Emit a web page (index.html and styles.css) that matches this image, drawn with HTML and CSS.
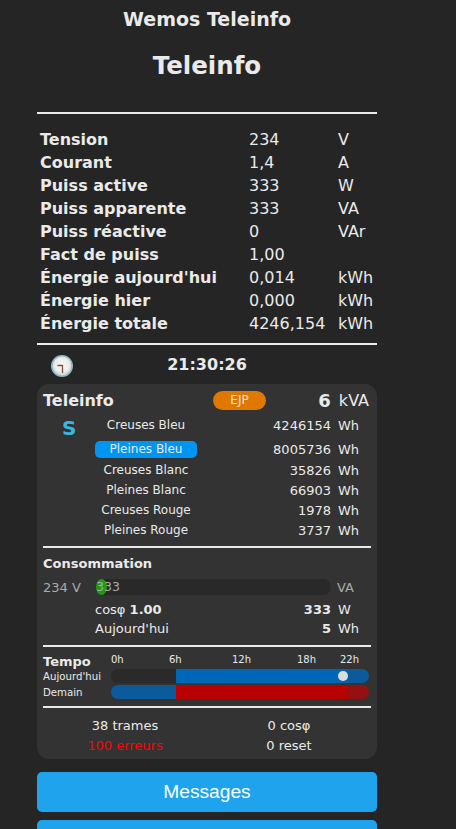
FILE: index.html
```html
<!DOCTYPE html>
<html lang="fr">
<head>
<meta charset="utf-8">
<title>Wemos Teleinfo</title>
<link rel="stylesheet" href="styles.css">
</head>
<body>
<div class="page">
  <h3 class="host">Wemos Teleinfo</h3>
  <h2 class="name">Teleinfo</h2>
  <div class="panel">
    <hr class="rule top-rule">
    <table class="sensors">
      <tr><th>Tension</th><td class="val">234</td><td>V</td></tr>
      <tr><th>Courant</th><td class="val">1,4</td><td>A</td></tr>
      <tr><th>Puiss active</th><td class="val">333</td><td>W</td></tr>
      <tr><th>Puiss apparente</th><td class="val">333</td><td>VA</td></tr>
      <tr><th>Puiss réactive</th><td class="val">0</td><td>VAr</td></tr>
      <tr><th>Fact de puiss</th><td class="val">1,00</td><td></td></tr>
      <tr><th>Énergie aujourd'hui</th><td class="val">0,014</td><td>kWh</td></tr>
      <tr><th>Énergie hier</th><td class="val">0,000</td><td>kWh</td></tr>
      <tr><th>Énergie totale</th><td class="val">4246,154</td><td>kWh</td></tr>
    </table>
    <hr class="rule">
    <div class="clock-row">
      <svg class="clock" viewBox="0 0 24 24" width="24" height="24" aria-hidden="true">
        <defs><radialGradient id="face" cx="50%" cy="45%" r="55%"><stop offset="0" stop-color="#fafafa"/><stop offset=".72" stop-color="#ecebe6"/><stop offset="1" stop-color="#c3d0d0"/></radialGradient></defs>
        <circle cx="12" cy="12" r="11" fill="#8fb8c4"/>
        <circle cx="12" cy="12" r="9.4" fill="url(#face)"/>
        <path d="M7.5 11.5 H12.5 V19" stroke="#7a5044" stroke-width="1.3" fill="none"/>
      </svg>
      <b class="time">21:30:26</b>
    </div>
    <section class="card">
      <div class="card-head">
        <b class="card-title">Teleinfo</b>
        <span class="badge">EJP</span>
        <span class="power"><b>6</b><span>kVA</span></span>
      </div>
      <div class="tariffs">
        <div class="logo-col"><span class="logo">S</span></div>
        <div class="tariff-list">
          <div class="tariff"><span class="t-name">Creuses Bleu</span><span class="t-val">4246154</span><span class="t-unit">Wh</span></div>
          <div class="tariff t-active"><span class="t-name"><span class="pill">Pleines Bleu</span></span><span class="t-val">8005736</span><span class="t-unit">Wh</span></div>
          <div class="tariff"><span class="t-name">Creuses Blanc</span><span class="t-val">35826</span><span class="t-unit">Wh</span></div>
          <div class="tariff"><span class="t-name">Pleines Blanc</span><span class="t-val">66903</span><span class="t-unit">Wh</span></div>
          <div class="tariff"><span class="t-name">Creuses Rouge</span><span class="t-val">1978</span><span class="t-unit">Wh</span></div>
          <div class="tariff"><span class="t-name">Pleines Rouge</span><span class="t-val">3737</span><span class="t-unit">Wh</span></div>
        </div>
      </div>
      <hr class="rule inner">
      <b class="sub">Consommation</b>
      <div class="gauge-row">
        <span class="volt">234 V</span>
        <div class="gauge"><span class="gauge-dot"></span><span class="gauge-num">333</span></div>
        <span class="va">VA</span>
      </div>
      <div class="cons"><span class="c-name">cosφ <b>1.00</b></span><b class="c-val">333</b><span class="c-unit">W</span></div>
      <div class="cons"><span class="c-name">Aujourd'hui</span><b class="c-val">5</b><span class="c-unit">Wh</span></div>
      <hr class="rule inner">
      <div class="tempo">
        <div class="tempo-hours"><b class="tempo-title">Tempo</b>
          <div class="hours"><span class="h0">0h</span><span class="h6">6h</span><span class="h12">12h</span><span class="h18">18h</span><span class="h22">22h</span></div>
        </div>
        <div class="tempo-row"><span class="tempo-label">Aujourd'hui</span>
          <div class="track"><i class="seg s-dark"></i><i class="seg s-blue"></i><i class="seg s-blue-dim s-fill"></i><span class="now"></span></div>
        </div>
        <div class="tempo-row"><span class="tempo-label">Demain</span>
          <div class="track"><i class="seg s-blue-dim s-first"></i><i class="seg s-red"></i><i class="seg s-red-dim"></i></div>
        </div>
      </div>
      <hr class="rule inner">
      <div class="stats">
        <span>38 trames</span><span>0 cosφ</span>
        <span class="err">100 erreurs</span><span>0 reset</span>
      </div>
    </section>
    <button class="btn" type="button">Messages</button>
    <button class="btn" type="button" aria-label="Suite"></button>
  </div>
</div>
</body>
</html>
```
FILE: styles.css
```css
* { box-sizing: border-box; }
html, body { margin: 0; height: 829px; overflow: hidden; background: #252525; }
body { color: #eaeaea; font-family: "DejaVu Sans", Verdana, sans-serif; font-size: 16px; }
.page { width: 414px; text-align: center; }
.host { margin: 0; padding-top: 8px; font-size: 19px; line-height: 22px; }
.name { margin: 0; padding-top: 22px; font-size: 24.5px; line-height: 28px; }
.panel { width: 340px; margin: 32px auto 0; text-align: left; }
.rule { display: block; height: 2px; margin: 0; border: 0; background: #eaeaea; }
.sensors { border-collapse: collapse; margin: 14px 0 8px; width: 340px; table-layout: fixed; }
.sensors th, .sensors td { padding: 0 0 0 3px; height: 23px; line-height: 23px; font-weight: normal; text-align: left; white-space: nowrap; }
.sensors th { width: 209px; font-weight: bold; }
.sensors .val { width: 89px; }
.clock-row { display: flex; align-items: center; height: 39px; position: relative; }
.clock { margin-left: 13px; margin-top: 2px; }
.time { position: absolute; left: 0; right: 0; text-align: center; }
.card { background: #333; border-radius: 12px; height: 375px; padding: 6px 6px 0; }
.card-head { display: flex; align-items: center; height: 20px; }
.card-title { width: 170px; font-size: 16px; }
.badge { width: 53px; height: 19px; line-height: 18px; border-radius: 10px; background: #e07800; text-align: center; font-size: 12px; }
.power { flex: 1; display: flex; justify-content: flex-end; align-items: center; padding-right: 2px; font-size: 16px; }
.power b { font-size: 18px; margin-right: 8px; }
.tariffs { display: flex; margin-top: 5px; }
.logo-col { flex: none; width: 42px; padding: 1px 0 0 19px; }
.logo { color: #38b6e0; font-weight: bold; font-size: 20px; line-height: 24px; }
.tariff-list { flex: 1; }
.tariff { display: flex; align-items: center; height: 20px; font-size: 12px; white-space: nowrap; }
.t-name { flex: none; width: 122px; text-align: center; }
.t-val { flex: none; width: 124px; text-align: right; font-size: 13px; }
.t-unit { margin-left: 7px; font-size: 13px; }
.t-active { height: 22px; margin-top: 3px; }
.pill { display: block; margin: 0 10px; height: 17px; line-height: 17px; border-radius: 5px; background: #0095f0; }
.inner { margin-top: 6px; margin-bottom: 8px; }
.sub { display: block; font-size: 13px; line-height: 16px; }
.gauge-row { display: flex; align-items: center; margin-top: 7px; height: 16px; color: #aaa; font-size: 13px; }
.volt { flex: none; width: 53px; }
.gauge { position: relative; flex: none; width: 234px; height: 16px; border-radius: 6px; background: #292929; }
.gauge-dot { position: absolute; left: 0; top: 0; width: 11px; height: 16px; border-radius: 50%; background: #1f9a12; }
.gauge-num { position: relative; line-height: 16px; font-size: 12.5px; }
.va { margin-left: 7px; }
.cons { display: flex; align-items: center; height: 19px; font-size: 13px; margin-left: 52px; }
.gauge-row + .cons { margin-top: 5px; }
.cons + .inner { margin-top: 7px; }
.c-name { flex: none; width: 150px; }
.c-val { flex: none; width: 86px; text-align: right; }
.c-unit { margin-left: 7px; }
.tempo { margin-top: -1px; }
.tempo-hours { display: flex; height: 14px; align-items: center; }
.tempo-title { flex: none; width: 68px; font-size: 13px; }
.hours { position: relative; flex: 1; height: 14px; font-size: 10px; }
.hours span { position: absolute; top: -1px; line-height: 14px; }
.h0 { left: 0; } .h6 { left: 58px; } .h12 { left: 121px; } .h18 { left: 186px; } .h22 { left: 229px; }
.tempo-row { display: flex; align-items: center; height: 16px; font-size: 10.2px; }
.tempo-label { flex: none; width: 68px; }
.track { position: relative; flex: 1; display: flex; height: 14px; margin-right: 2px; border-radius: 7px; overflow: hidden; }
.seg { display: block; height: 14px; }
.s-dark { width: 65px; background: #2a2a2a; }
.s-blue { width: 172px; background: #0066b8; }
.s-blue-dim { background: #0b5a9c; }
.s-fill { flex: 1; }
.s-first { width: 65px; }
.s-red { width: 172px; background: #b80000; }
.s-red-dim { flex: 1; background: #951010; }
.now { position: absolute; left: 227px; top: 2px; width: 10px; height: 10px; border-radius: 50%; background: #ddd; }
.stats { display: grid; grid-template-columns: 164px 164px; text-align: center; font-size: 13px; line-height: 20px; margin-top: 0; }
.err { color: #f00; }
.btn { display: block; width: 340px; height: 40px; margin-top: 8px; border: 0; border-radius: 5px; background: #1fa3ec; color: #faffff; font-family: "Liberation Sans", Arial, sans-serif; font-size: 19.2px; }
.card + .btn { margin-top: 13px; }
```
